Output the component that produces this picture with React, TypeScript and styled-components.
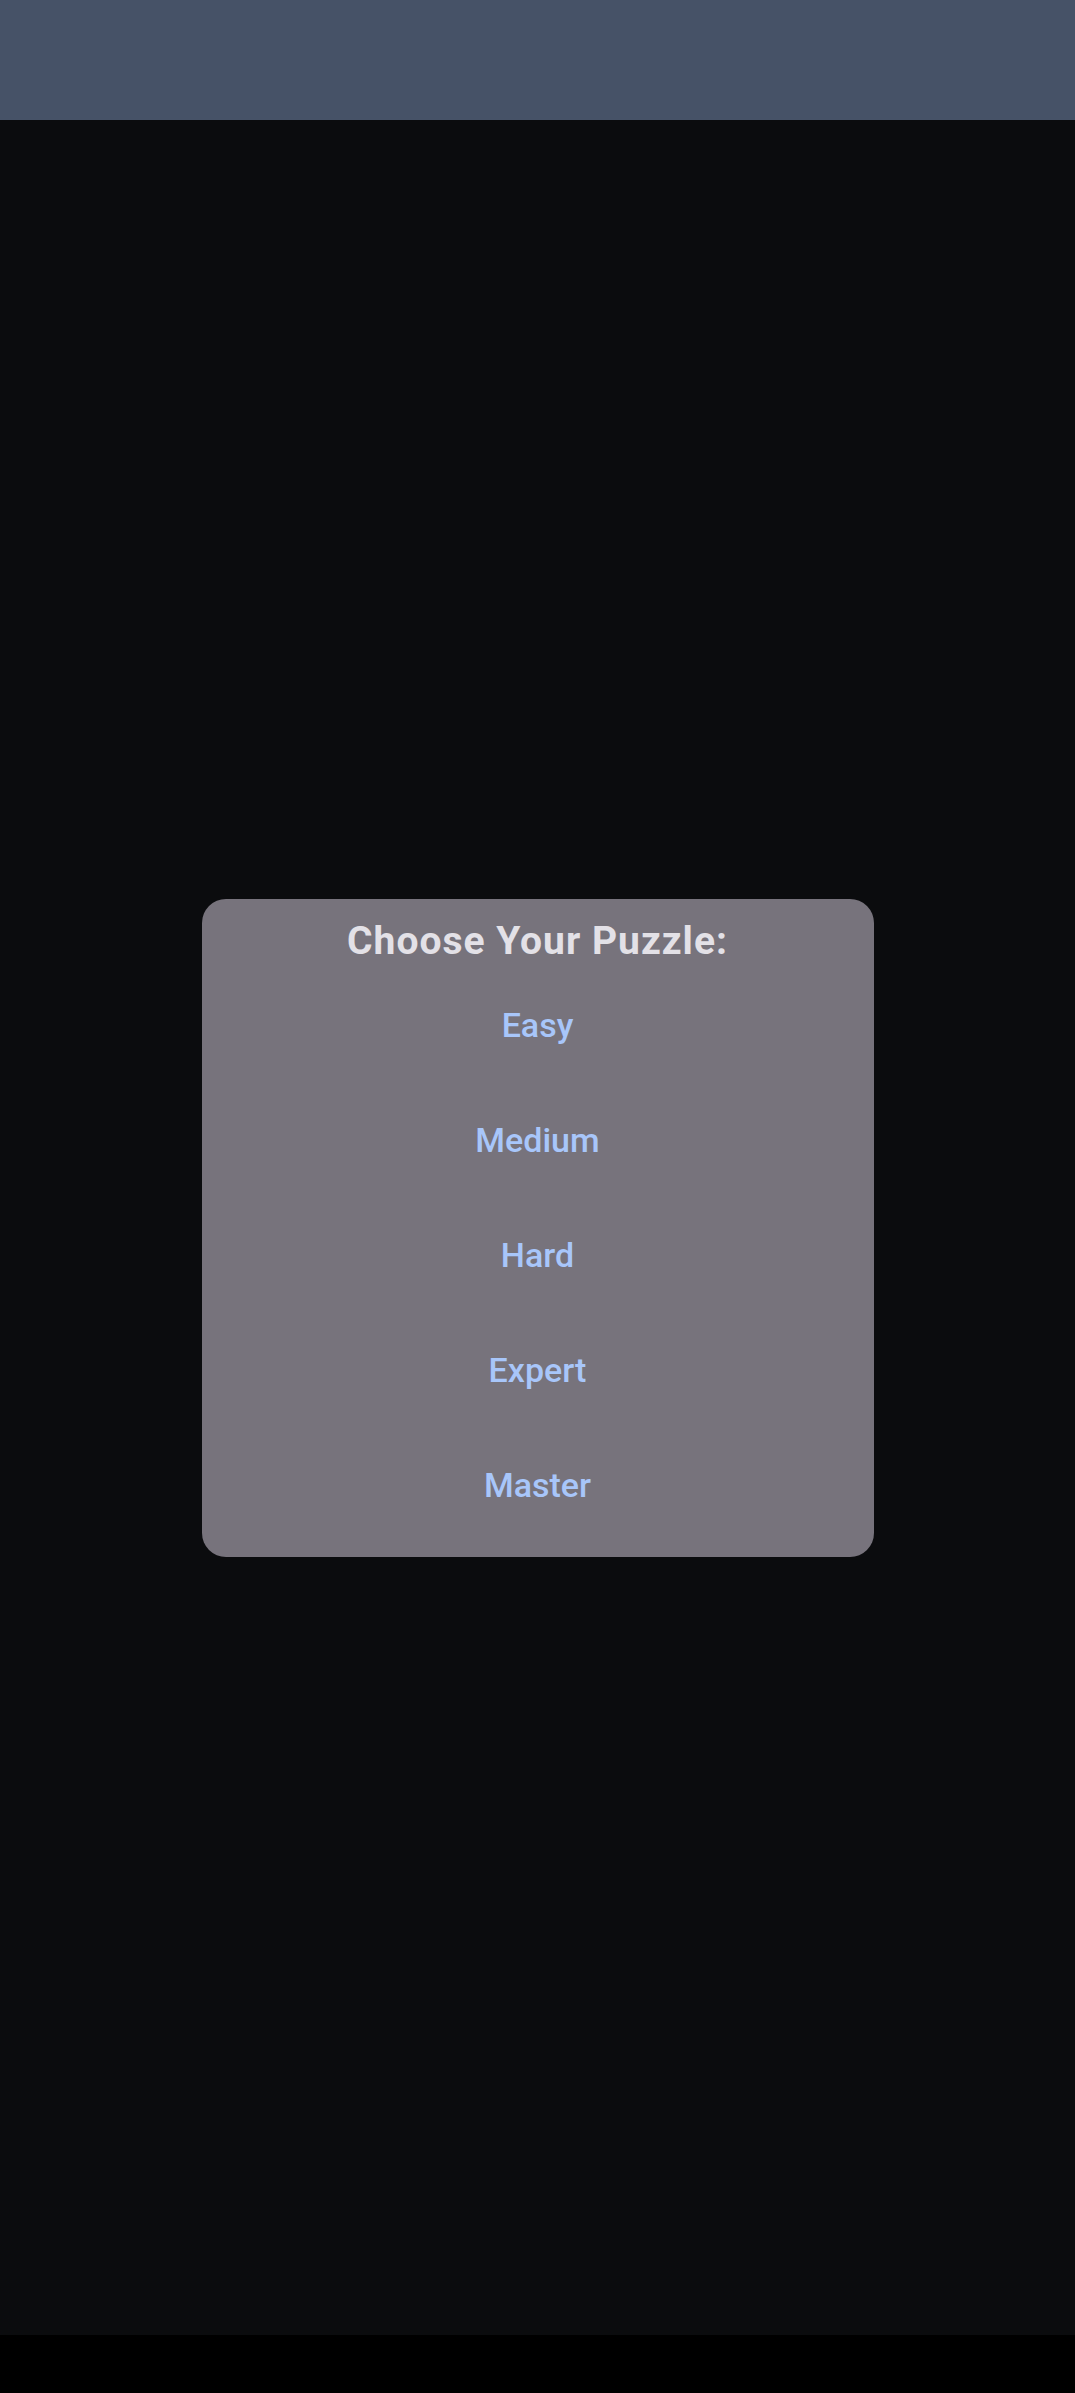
import React from "react";
import styled, { createGlobalStyle } from "styled-components";

const GlobalStyle = createGlobalStyle`
  html, body {
    margin: 0;
    padding: 0;
    background: #000000;
  }
  body {
    font-family: Roboto, "Noto Sans", "Liberation Sans", sans-serif;
  }
`;

const Screen = styled.div`
  display: flex;
  flex-direction: column;
  width: 1075px;
  height: 2393px;
  background: #000000;
`;

const TopBar = styled.header`
  height: 120px;
  flex-shrink: 0;
  background: #465267;
`;

const Content = styled.main`
  flex: 1;
  display: flex;
  align-items: center;
  justify-content: center;
  background: #0b0c0e;
`;

const NavBar = styled.footer`
  height: 58px;
  flex-shrink: 0;
  background: #000000;
`;

const Dialog = styled.section`
  width: 672px;
  box-sizing: border-box;
  padding: 19px 0 14px;
  background: #77737c;
  border-radius: 24px;
  display: flex;
  flex-direction: column;
  align-items: stretch;
`;

const Title = styled.h2`
  margin: 0 0 3px;
  height: 47px;
  font-size: 39px;
  line-height: 47px;
  font-weight: 700;
  color: #e3e1e7;
  text-align: center;
  letter-spacing: 1px;
`;

const Option = styled.button`
  height: 115px;
  border: none;
  background: transparent;
  padding: 0;
  font-family: Roboto, "Noto Sans", "Liberation Sans", sans-serif;
  font-size: 34px;
  line-height: 115px;
  font-weight: 500;
  color: #a8c6fa;
  text-align: center;
  cursor: pointer;
`;

const levels = ["Easy", "Medium", "Hard", "Expert", "Master"];

export default function App() {
  return (
    <>
      <GlobalStyle />
      <Screen>
        <TopBar />
        <Content>
          <Dialog>
            <Title>Choose Your Puzzle:</Title>
            {levels.map((l) => (
              <Option key={l}>{l}</Option>
            ))}
          </Dialog>
        </Content>
        <NavBar />
      </Screen>
    </>
  );
}
